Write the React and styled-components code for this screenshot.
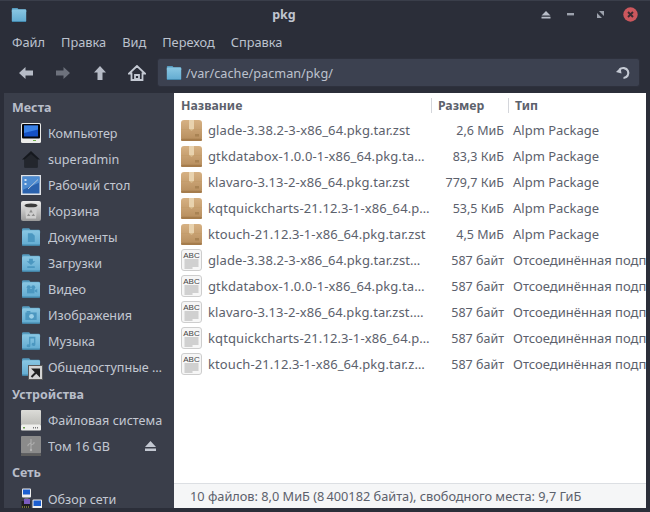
import React from 'react';
import styled, { createGlobalStyle } from 'styled-components';

const Global = createGlobalStyle`
  html, body { margin: 0; padding: 0; width: 650px; height: 512px; overflow: hidden; background: #2b2e39; }
  * { box-sizing: border-box; }
  #root { font-family: "Noto Sans", "Open Sans", sans-serif; }
`;

const Win = styled.div`
  width: 650px; height: 512px; background: #2b2e39; display: flex; flex-direction: column;
  overflow: hidden; color: #c5cad6; font-size: 12.5px; border-top: 1px solid #3a3e4a;
`;
const TitleBar = styled.div`
  height: 28px; flex: none; display: flex; align-items: center; padding: 0 7px 1px 11px; position: relative;
`;
const Title = styled.div`
  position: absolute; left: 0; right: 82px; top: 4px; text-align: center; font-weight: 700; font-size: 12.5px; color: #c0c5d0; line-height: 20px;
`;
const WinBtns = styled.div`
  margin-left: auto; display: flex; align-items: center;
`;
const WinBtn = styled.div`
  width: ${p => p.$w}px; height: 20px; display: flex; align-items: center; justify-content: center;
`;
const Menu = styled.div`
  height: 26px; flex: none; display: flex; align-items: center; padding: 0 0 0 12px; gap: 16px; font-size: 12.8px; color: #bcc2ce;
`;
const Toolbar = styled.div`
  height: 38px; flex: none; display: flex; align-items: center; padding: 0 10px 3px 7px;
`;
const NavBtn = styled.div`
  width: ${p => p.$w}px; height: 26px; display: flex; align-items: center; justify-content: center; flex: none;
`;
const Path = styled.div`
  width: 483px; height: 29px; margin-left: auto; background: #3c4150; border: 1px solid #2e313d; border-radius: 3px; display: flex; align-items: center;
  padding: 0 8px 0 8px; color: #bcc2ce; font-size: 12.7px; gap: 4px;
`;
const PathText = styled.span`flex: 1;`;
const Main = styled.div`
  flex: 1; min-height: 0; display: flex; margin: 0 4px 4px 4px; background: #ffffff;
`;
const Side = styled.div`
  width: 170px; flex: none; background: #3a3e4a; display: flex; flex-direction: column; padding-top: 1px; overflow: hidden;
`;
const SideTitle = styled.div`
  height: 26px; flex: none; line-height: ${p => p.$lh || 26}px; margin-top: ${p => p.$mt || 0}px; padding-left: 8px; font-weight: 700; font-size: 12.5px; color: #b8bdc9;
`;
const SideRow = styled.div`
  height: 26px; flex: none; display: flex; align-items: center; padding-left: 17px; color: #c3c8d2; font-size: 12.6px; white-space: nowrap;
`;
const SideIcon = styled.div`
  width: 27px; height: 22px; flex: none; display: flex; align-items: center; position: relative;
`;
const SideText = styled.span`flex: 1; overflow: hidden;`;
const Eject = styled.div`
  width: 12px; height: 12px; margin-right: 18px; display: flex; align-items: center; justify-content: center;
`;
const Content = styled.div`
  flex: 1; min-width: 0; display: flex; flex-direction: column; background: #fff; overflow: hidden;
`;
const Table = styled.div`
  flex: 1; min-height: 0; overflow: hidden;
`;
const HeadRow = styled.div`
  display: grid; grid-template-columns: 257px 77px 1fr; height: 24px; align-items: center; color: #5c616c; font-weight: 700; font-size: 12.3px;
`;
const HeadCell = styled.div`
  height: 15px; line-height: 15px; padding-left: ${p => p.$pl || 6}px; border-left: ${p => (p.$first ? 'none' : '1px solid #d4d6db')}; white-space: nowrap;
`;
const Row = styled.div`
  display: grid; grid-template-columns: 257px 77px 1fr; height: 26px; align-items: center; color: #5c616c; font-size: 13px; white-space: nowrap;
`;
const NameCell = styled.div`
  display: flex; align-items: center; padding-left: 7px; gap: 6px; overflow: hidden;
`;
const NameText = styled.span`
  flex: 1; overflow: hidden; min-width: 0; letter-spacing: 0.1px;
`;
const SizeCell = styled.div`text-align: right; padding-right: 4px; font-size: 12.5px;`;
const TypeCell = styled.div`padding-left: 5px; overflow: hidden;`;
const Status = styled.div`
  height: 25px; flex: none; background: #f5f6f7; border-top: 1px solid #dcdfe3; color: #5c616c; font-size: 12.75px; line-height: 25px; padding-left: 16px;
`;

const Folder = ({ size = 16, glyph }) => (
  <svg width={size} height={size} viewBox="0 0 16 16">
    <defs>
      <linearGradient id="fg" x1="0" y1="0" x2="0" y2="1">
        <stop offset="0" stopColor="#8ac7e3" />
        <stop offset="1" stopColor="#62abd1" />
      </linearGradient>
    </defs>
    <path d="M1.8 1h4.700l1 1.200h6.700a1.100 1.100 0 0 1 1.100 1.100V5H.8V2a1 1 0 0 1 1-1z" fill="#569cc0" />
    <rect x="0.8" y="2.500" width="14.400" height="12.300" rx="1.200" fill="url(#fg)" />
    <rect x="0.8" y="14" width="14.400" height="1" rx="0.500" fill="#4389ae" />
    {glyph}
  </svg>
);

const gl = '#4b97c0';
const G = {
  doc: <path d="M5.500 5h3.500l2 2v5h-5.500z" fill={gl} />,
  down: <path d="M6.500 4.500h3v2h2L8 9.500 4.500 6.500h2zM5 10.500h6v1.500H5z" fill={gl} />,
  video: <g fill={gl}><circle cx="6.200" cy="6.500" r="1.600" /><circle cx="9.800" cy="6.500" r="1.600" /><rect x="4.800" y="8" width="6" height="3.500" /><path d="M11 9l2-1v3l-2-1z" /></g>,
  photo: <g><rect x="3.500" y="6" width="9" height="6" fill={gl} /><rect x="4.500" y="4.800" width="3" height="1.400" fill={gl} /><circle cx="8.400" cy="9" r="1.900" fill="#9bd0e8" /></g>,
  music: <path d="M6.500 4.500h5v6.200a1.500 1.200 0 1 1-1-1.100V6H7.500v5.800a1.500 1.200 0 1 1-1-1.100z" fill={gl} />,
};

const Computer = () => (
  <svg width="20" height="20" viewBox="0 0 20 20">
    <rect x="0" y="0" width="20" height="20" rx="1.500" fill="#ececea" />
    <rect x="1" y="1" width="18" height="14.500" rx="1" fill="#05070c" />
    <rect x="3" y="2.500" width="14" height="11" fill="#1450c4" />
    <path d="M3 2.500h14v4L3 10z" fill="#3b82e6" />
    <rect x="12" y="17" width="3" height="1" fill="#6fb04a" />
  </svg>
);
const DarkHome = () => (
  <svg width="20" height="20" viewBox="0 0 20 20">
    <path d="M10 2 L19 10.500 H16.500 V18.500 H3.500 V10.500 H1 Z" fill="#15181e" />
    <path d="M3.500 10.500 V18.500 H16.500 V10.500 L10 5z" fill="#23262d" />
  </svg>
);
const Desktop = () => (
  <svg width="20" height="20" viewBox="0 0 20 20">
    <rect x="0" y="0" width="20" height="20" fill="#dfe2e6" />
    <rect x="1.500" y="1.500" width="17" height="17" fill="#2a62ae" />
    <path d="M1.500 1.500h17v6L1.500 15z" fill="#4d8bd0" />
    <rect x="3.500" y="4" width="2" height="2" fill="#cfe0f2" />
    <rect x="3.500" y="8" width="2" height="2" fill="#cfe0f2" />
    <path d="M7 14L17 4.500" stroke="#b9c7d8" strokeWidth="1" />
  </svg>
);
const Trash = () => (
  <svg width="20" height="20" viewBox="0 0 20 20">
    <defs>
      <linearGradient id="tr" x1="0" y1="0" x2="0" y2="1"><stop offset="0" stopColor="#ececec" /><stop offset="1" stopColor="#9a9a9a" /></linearGradient>
    </defs>
    <rect x="0" y="0" width="20" height="20" rx="2" fill="url(#tr)" />
    <ellipse cx="10" cy="4.500" rx="6.500" ry="2" fill="#3b3b3b" />
    <path d="M4 6.500h12l-1 11H5z" fill="#cfcfcf" />
    <path d="M10 8.500l1.800 3h-3.600zM7.500 12.500l2 2.500H6zM12.500 12.500L14 15h-3.500z" fill="#8c8c8c" />
  </svg>
);
const Drive = () => (
  <svg width="20" height="21" viewBox="0 0 20 21">
    <defs>
      <linearGradient id="dr" x1="0" y1="0" x2="0" y2="1"><stop offset="0" stopColor="#dcdcd8" /><stop offset="1" stopColor="#bdbdb8" /></linearGradient>
    </defs>
    <rect x="0" y="0" width="20" height="15" rx="1" fill="url(#dr)" />
    <rect x="0" y="14.500" width="20" height="6" rx="1" fill="#efefec" />
    <rect x="2" y="17" width="2" height="1.500" fill="#6fa050" />
    <rect x="12" y="17" width="1" height="1.500" fill="#777" />
    <rect x="14" y="17" width="1" height="1.500" fill="#777" />
    <rect x="16" y="17" width="1" height="1.500" fill="#777" />
  </svg>
);
const Usb = () => (
  <svg width="20" height="20" viewBox="0 0 20 20">
    <rect x="0" y="0" width="20" height="17.500" rx="1" fill="#8b8b8b" />
    <rect x="0" y="17.500" width="20" height="2.500" fill="#5e5e5e" />
    <path d="M10 3v11M10 7l-3 1.600v1.600M10 9l3-1.400V6" stroke="#b4b4b4" strokeWidth="0.900" fill="none" />
    <circle cx="10" cy="14" r="1.200" fill="#b4b4b4" />
  </svg>
);
const Network = () => (
  <svg width="22" height="22" viewBox="0 0 22 22">
    <rect x="1" y="0.500" width="9" height="9" rx="1" fill="#f0f0f0" />
    <rect x="2" y="1.500" width="7" height="5" fill="#1c5fd0" />
    <rect x="3.500" y="9.500" width="4" height="1" fill="#999" />
    <rect x="0.500" y="13" width="9" height="8.500" fill="#1e1e22" />
    <rect x="3" y="11" width="6" height="5" fill="#7a5cc0" />
    <path d="M1 19h1M3 19h1M5 19h1M7 19h1" stroke="#c8c850" />
    <rect x="11.500" y="11.500" width="9.500" height="9" rx="1" fill="#f0f0f0" />
    <rect x="12.500" y="12.500" width="7.500" height="5.500" fill="#1c5fd0" />
    <rect x="11" y="20" width="10" height="1.500" fill="#222" />
  </svg>
);
const Shortcut = styled.div`
  position: absolute; left: 7px; top: 9px; width: 15px; height: 15px; background: #d4d4d4; border: 1px solid #5a5a5a; display: flex;
`;
const Package = () => (
  <svg width="21" height="21" viewBox="0 0 21 21">
    <defs>
      <linearGradient id="pk" x1="0" y1="0" x2="0" y2="1"><stop offset="0" stopColor="#d6b183" /><stop offset="1" stopColor="#b68d5d" /></linearGradient>
    </defs>
    <rect x="0" y="0" width="21" height="21" rx="3" fill="url(#pk)" />
    <path d="M0 9.500h21" stroke="#c49d6c" />
    <rect x="8" y="0" width="5" height="9" fill="#e8d2ae" />
    <path d="M8 9l2.500 2L13 9z" fill="#d8bb8e" />
    <rect x="14" y="14" width="4" height="2.500" fill="#a07a4c" opacity="0.700" />
    <rect x="0" y="18.800" width="21" height="2.200" rx="1" fill="#a57c4c" />
  </svg>
);
const Sig = () => (
  <svg width="21" height="22" viewBox="0 0 21 22">
    <rect x="0.500" y="0.500" width="20" height="21" rx="2.500" fill="#f6f6f6" stroke="#cdcdcd" />
    <text x="10.500" y="8.500" textAnchor="middle" fontFamily="Liberation Sans" fontSize="8" fill="#444">ABC</text>
    <path d="M3.500 11h14M3.500 13h14M3.500 15h14M3.500 17h14M3.500 19h8" stroke="#a2a2a2" strokeWidth="0.900" />
  </svg>
);

const places = [
  ['Компьютер', <Computer />],
  ['superadmin', <DarkHome />],
  ['Рабочий стол', <Desktop />],
  ['Корзина', <Trash />],
  ['Документы', <Folder size={20} glyph={G.doc} />],
  ['Загрузки', <Folder size={20} glyph={G.down} />],
  ['Видео', <Folder size={20} glyph={G.video} />],
  ['Изображения', <Folder size={20} glyph={G.photo} />],
  ['Музыка', <Folder size={20} glyph={G.music} />],
];

const files = [
  ['glade-3.38.2-3-x86_64.pkg.tar.zst', '2,6 МиБ', 'Alpm Package'],
  ['gtkdatabox-1.0.0-1-x86_64.pkg.ta…', '83,3 КиБ', 'Alpm Package'],
  ['klavaro-3.13-2-x86_64.pkg.tar.zst', '779,7 КиБ', 'Alpm Package'],
  ['kqtquickcharts-21.12.3-1-x86_64.p…', '53,5 КиБ', 'Alpm Package'],
  ['ktouch-21.12.3-1-x86_64.pkg.tar.zst', '4,5 МиБ', 'Alpm Package'],
  ['glade-3.38.2-3-x86_64.pkg.tar.zst…', '587 байт', 'Отсоединённая подпись'],
  ['gtkdatabox-1.0.0-1-x86_64.pkg.ta…', '587 байт', 'Отсоединённая подпись'],
  ['klavaro-3.13-2-x86_64.pkg.tar.zst.…', '587 байт', 'Отсоединённая подпись'],
  ['kqtquickcharts-21.12.3-1-x86_64.p…', '587 байт', 'Отсоединённая подпись'],
  ['ktouch-21.12.3-1-x86_64.pkg.tar.z…', '587 байт', 'Отсоединённая подпись'],
];

export default function App() {
  return (
    <Win>
      <Global />
      <TitleBar>
        <Folder size={16} />
        <Title>pkg</Title>
        <WinBtns>
          <WinBtn $w={25}><svg width="10" height="8" viewBox="0 0 10 8"><path d="M5 0l4.500 4.500h-9z M0.500 5.800h9V7.500h-9z" fill="#b9bec9" /></svg></WinBtn>
          <WinBtn $w={25}><svg width="7" height="3" viewBox="0 0 7 3"><rect width="7" height="2.400" fill="#9da2ad" /></svg></WinBtn>
          <WinBtn $w={35}><svg width="7" height="7" viewBox="0 0 7 7"><path d="M7 0v5L2 0zM0 7V2l5 5z" fill="#9da2ad" /></svg></WinBtn>
          <WinBtn $w={25}>
            <svg width="15" height="15" viewBox="0 0 15 15"><circle cx="7.500" cy="7.500" r="7.200" fill="#cc575d" /><path d="M5 5l5 5M10 5l-5 5" stroke="#3a2c32" strokeWidth="1.900" /></svg>
          </WinBtn>
        </WinBtns>
      </TitleBar>
      <Menu>
        <span>Файл</span><span>Правка</span><span>Вид</span><span>Переход</span><span>Справка</span>
      </Menu>
      <Toolbar>
        <NavBtn $w={37}><svg width="14" height="12" viewBox="0 0 14 12"><path d="M6.500 0v3.500H14v5H6.500V12L0 6z" fill="#b6bbc6" /></svg></NavBtn>
        <NavBtn $w={37}><svg width="14" height="12" viewBox="0 0 14 12"><path d="M7.500 0v3.500H0v5h7.500V12L14 6z" fill="#6d717c" /></svg></NavBtn>
        <NavBtn $w={37}><svg width="12" height="14" viewBox="0 0 12 14"><path d="M6 0l6 6.500H8.500V14h-5V6.500H0z" fill="#b6bbc6" /></svg></NavBtn>
        <NavBtn $w={37}><svg width="18" height="16" viewBox="0 0 18 16"><path d="M9 1L1 8.500h2.500V15h11V8.500H17zM7 10h4v4H7z" fill="none" stroke="#c4c9d3" strokeWidth="1.800" strokeLinejoin="miter" /></svg></NavBtn>
        <Path>
          <Folder size={16} />
          <PathText>/var/cache/pacman/pkg/</PathText>
          <svg width="15" height="15" viewBox="0 0 15 15"><path d="M3.600 4.700A5 5 0 1 1 7.500 13" fill="none" stroke="#c4c9d3" strokeWidth="2.200" /><path d="M0 7l4.500-4.500 1 6z" fill="#c4c9d3" /></svg>
        </Path>
      </Toolbar>
      <Main>
        <Side>
          <SideTitle $lh={28}>Места</SideTitle>
          {places.map(([t, icon]) => (
            <SideRow key={t}><SideIcon>{icon}</SideIcon><SideText>{t}</SideText></SideRow>
          ))}
          <SideRow>
            <SideIcon>
              <Folder size={20} />
              <Shortcut><svg width="13" height="13" viewBox="0 0 13 13"><path d="M2.500 11L8 5.500M4.500 3.500h5.500V9z" stroke="#222" strokeWidth="2" fill="#222" /></svg></Shortcut>
            </SideIcon>
            <SideText>Общедоступные …</SideText>
          </SideRow>
          <SideTitle $mt={1} $lh={28}>Устройства</SideTitle>
          <SideRow><SideIcon><Drive /></SideIcon><SideText>Файловая система</SideText></SideRow>
          <SideRow>
            <SideIcon><Usb /></SideIcon><SideText>Том 16 GB</SideText>
            <Eject><svg width="11" height="10" viewBox="0 0 11 10"><path d="M5.500 0L11 6H0zM0 7.500h11V10H0z" fill="#c3c8d2" /></svg></Eject>
          </SideRow>
          <SideTitle $mt={1}>Сеть</SideTitle>
          <SideRow><SideIcon><Network /></SideIcon><SideText>Обзор сети</SideText></SideRow>
        </Side>
        <Content>
          <Table>
            <HeadRow>
              <HeadCell $first $pl={7}>Название</HeadCell>
              <HeadCell>Размер</HeadCell>
              <HeadCell>Тип</HeadCell>
            </HeadRow>
            {files.map(([n, s, t], i) => (
              <Row key={i}>
                <NameCell>{i < 5 ? <Package /> : <Sig />}<NameText>{n}</NameText></NameCell>
                <SizeCell>{s}</SizeCell>
                <TypeCell>{t}</TypeCell>
              </Row>
            ))}
          </Table>
          <Status>10 файлов: 8,0 МиБ (8{'\u2009'}400182 байта), свободного места: 9,7 ГиБ</Status>
        </Content>
      </Main>
    </Win>
  );
}
